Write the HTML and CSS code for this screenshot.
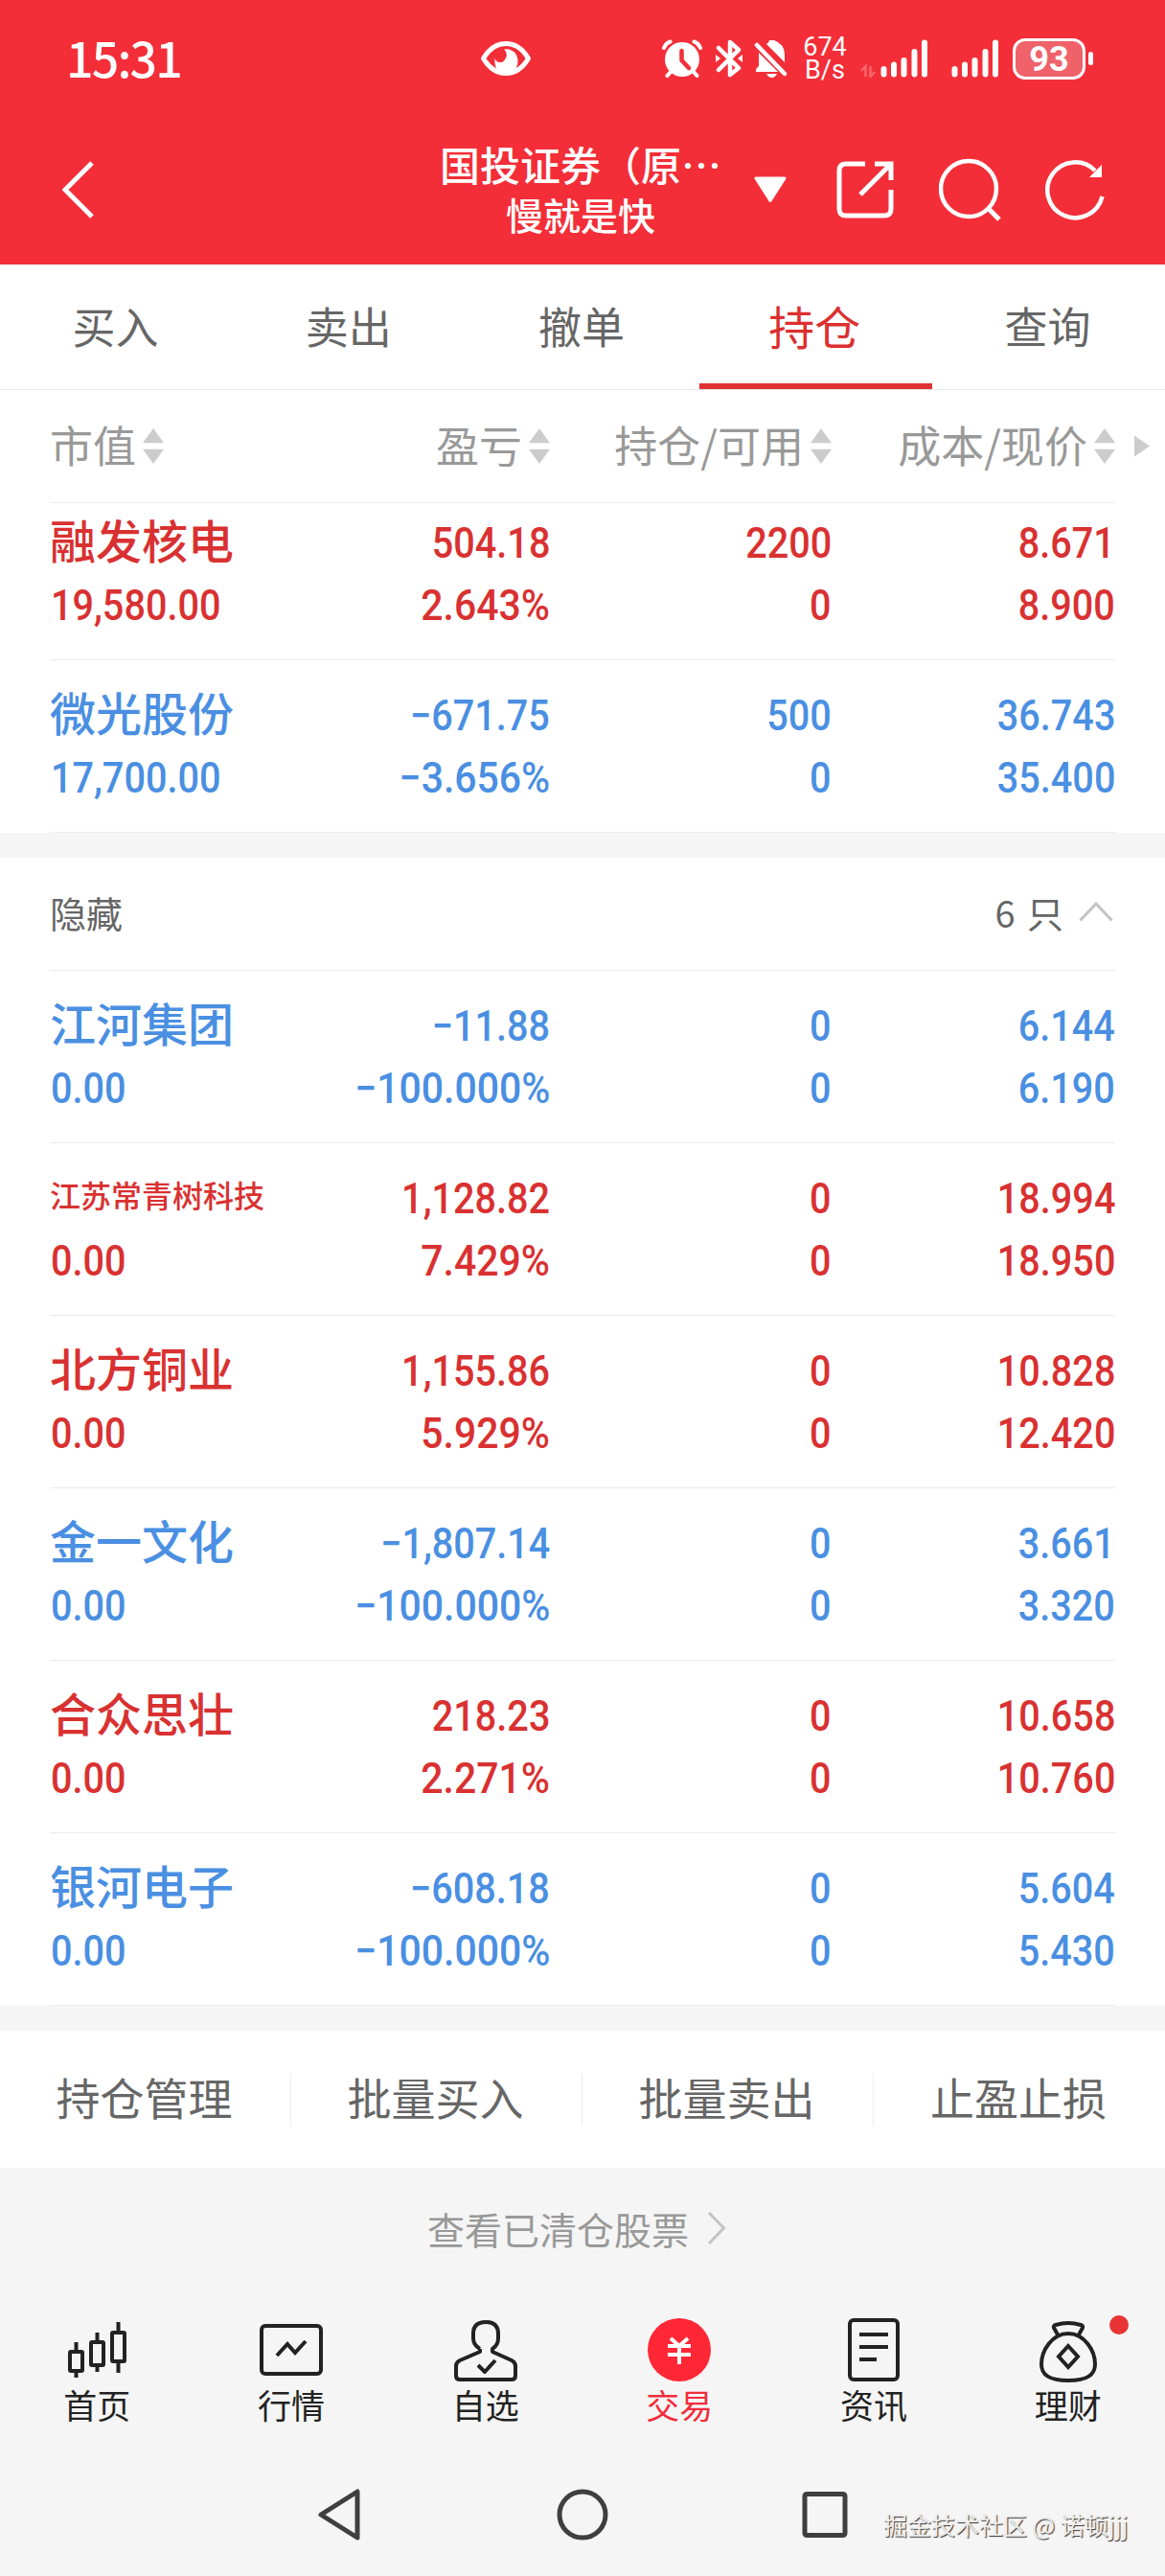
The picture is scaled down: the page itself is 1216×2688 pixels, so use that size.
FILE: index.html
```html
<!DOCTYPE html>
<html lang="zh-CN">
<head>
    <meta charset="UTF-8">
    <meta name="viewport" content="width=device-width, initial-scale=1.0">
    <title>持仓</title>
    <link rel="stylesheet" href="styles.css">
</head>
<body>
    <header class="header">
        <div class="status-bar">
            <span class="time">15:31</span>
            <svg class="icon-eye" width="54" height="38" viewBox="0 0 54 38">
                <path d="M3.500 19C10 8 17 3.500 27 3.500S44 8 50.500 19C44 30 37 34.500 27 34.500S10 30 3.500 19Z" fill="none" stroke="#fff" stroke-width="5" stroke-linejoin="round"/>
                <path d="M25 9.500A12 12 0 0 1 39.500 21C39.500 30 34 36 27 36S14.500 30 15.500 18.500A5.600 5.600 0 0 0 26 20C29 17 28 12 25 9.500Z" fill="#fff"/>
            </svg>
            <div class="status-right">
                <svg width="42" height="40" viewBox="0 0 42 40">
                    <circle cx="21" cy="21" r="18" fill="#fff"/>
                    <path d="M2 9Q4 4 8.500 2.500M40 9Q38 4 33.500 2.500M9 34L5.500 38M33 34L36.500 38" stroke="#fff" stroke-width="4" stroke-linecap="round" fill="none"/>
                    <path d="M20.500 12V22L28 30" stroke="#f32e38" stroke-width="4.500" stroke-linecap="round" stroke-linejoin="round" fill="none"/>
                </svg>
                <svg class="icon-bt" width="28" height="40" viewBox="0 0 28 40">
                    <path d="M3 9L24 30L15 37V3L24 11L3 32" stroke="#fff" stroke-width="4.500" stroke-linejoin="round" stroke-linecap="round" fill="none"/>
                    <path d="M0 16L5 20L0 24ZM28 16L23 20L28 24Z" fill="#fff"/>
                </svg>
                <svg class="icon-bell" width="36" height="40" viewBox="0 0 36 40">
                    <path d="M2 34V31L5 28V14L25 34ZM13 5Q16 3.500 16 1H21Q32 5 32 16V24Z" fill="#fff"/>
                    <path d="M13 36H24Q22 40 18.500 40T13 36Z" fill="#fff"/>
                    <path d="M3 6L32 36" stroke="#fff" stroke-width="4.500" stroke-linecap="round"/>
                </svg>
                <div class="speed"><span>674</span><span>B/s</span></div>
                <svg class="signal" width="70" height="40" viewBox="0 0 70 40">
                    <path d="M5.500 39V28L1 33M10.500 28V39L15 34" stroke="#f9656c" stroke-width="2.500" fill="none"/>
                    <path d="M24.500 31V36.500M35 26.500V36.500M45.500 22V36.500M56.500 13V36.500M67 3.500V36.500" stroke="#fff" stroke-width="6" stroke-linecap="round"/>
                </svg>
                <svg class="signal-second" width="50" height="40" viewBox="20 0 50 40">
                    <path d="M24.500 31V36.500M35 26.500V36.500M45.500 22V36.500M56.500 13V36.500M67 3.500V36.500" stroke="#fff" stroke-width="6" stroke-linecap="round"/>
                </svg>
                <div class="battery">93</div>
                <div class="battery-tip"></div>
            </div>
        </div>
        <div class="title-bar">
            <svg class="back" width="34" height="60" viewBox="0 0 34 60">
                <path d="M31 2L3 30L31 58" stroke="#fff" stroke-width="5" fill="none"/>
            </svg>
            <div class="title">
                <div class="account">国投证券（原…</div>
                <div class="nickname">慢就是快</div>
            </div>
            <svg class="dropdown" width="34" height="28" viewBox="0 0 34 28">
                <path d="M2 2H32L17 25.500Z" fill="#fff" stroke="#fff" stroke-width="3" stroke-linejoin="round"/>
            </svg>
            <svg class="share" width="60" height="60" viewBox="0 0 60 60">
                <path d="M30 3H10Q3 3 3 10V50Q3 57 10 57H50Q57 57 57 50V30M40 3H57V20M56 4L25 35" stroke="#fff" stroke-width="5" fill="none"/>
            </svg>
            <svg class="search" width="66" height="66" viewBox="0 0 66 66">
                <circle cx="31" cy="32" r="29" stroke="#fff" stroke-width="4.500" fill="none"/>
                <path d="M51 52L63 64" stroke="#fff" stroke-width="5"/>
            </svg>
            <svg class="refresh" width="64" height="64" viewBox="0 0 64 64">
                <path d="M52 12A29 29 0 1 0 59.500 39" stroke="#fff" stroke-width="4.500" fill="none"/>
                <path d="M59 6V19H46Z" fill="#fff"/>
            </svg>
        </div>
    </header>

    <nav class="tabs">
        <a>买入</a>
        <a>卖出</a>
        <a>撤单</a>
        <a class="active">持仓</a>
        <a>查询</a>
    </nav>

    <div class="table-head">
        <div>市值<i class="sort"></i></div>
        <div>盈亏<i class="sort"></i></div>
        <div>持仓/可用<i class="sort"></i></div>
        <div>成本/现价<i class="sort"></i></div>
        <i class="more"></i>
    </div>

    <section class="list">
        <div class="row up first">
            <div><span class="name">融发核电</span><span class="num">19,580.00</span></div>
            <div><span class="num">504.18</span><span class="num">2.643%</span></div>
            <div><span class="num">2200</span><span class="num">0</span></div>
            <div><span class="num">8.671</span><span class="num">8.900</span></div>
        </div>
        <div class="row down">
            <div><span class="name">微光股份</span><span class="num">17,700.00</span></div>
            <div><span class="num">−671.75</span><span class="num">−3.656%</span></div>
            <div><span class="num">500</span><span class="num">0</span></div>
            <div><span class="num">36.743</span><span class="num">35.400</span></div>
        </div>
    </section>

    <div class="gap"></div>

    <div class="group-head">
        <span>隐藏</span>
        <span class="count">6 只
            <svg width="36" height="22" viewBox="0 0 36 22">
                <path d="M1.500 20.500L18 3L34.500 20.500" stroke="#c4c4c4" stroke-width="3" fill="none"/>
            </svg>
        </span>
    </div>

    <section class="list">
        <div class="row down top-line">
            <div><span class="name">江河集团</span><span class="num">0.00</span></div>
            <div><span class="num">−11.88</span><span class="num">−100.000%</span></div>
            <div><span class="num">0</span><span class="num">0</span></div>
            <div><span class="num">6.144</span><span class="num">6.190</span></div>
        </div>
        <div class="row up">
            <div><span class="name small">江苏常青树科技</span><span class="num">0.00</span></div>
            <div><span class="num">1,128.82</span><span class="num">7.429%</span></div>
            <div><span class="num">0</span><span class="num">0</span></div>
            <div><span class="num">18.994</span><span class="num">18.950</span></div>
        </div>
        <div class="row up">
            <div><span class="name">北方铜业</span><span class="num">0.00</span></div>
            <div><span class="num">1,155.86</span><span class="num">5.929%</span></div>
            <div><span class="num">0</span><span class="num">0</span></div>
            <div><span class="num">10.828</span><span class="num">12.420</span></div>
        </div>
        <div class="row down">
            <div><span class="name">金一文化</span><span class="num">0.00</span></div>
            <div><span class="num">−1,807.14</span><span class="num">−100.000%</span></div>
            <div><span class="num">0</span><span class="num">0</span></div>
            <div><span class="num">3.661</span><span class="num">3.320</span></div>
        </div>
        <div class="row up">
            <div><span class="name">合众思壮</span><span class="num">0.00</span></div>
            <div><span class="num">218.23</span><span class="num">2.271%</span></div>
            <div><span class="num">0</span><span class="num">0</span></div>
            <div><span class="num">10.658</span><span class="num">10.760</span></div>
        </div>
        <div class="row down">
            <div><span class="name">银河电子</span><span class="num">0.00</span></div>
            <div><span class="num">−608.18</span><span class="num">−100.000%</span></div>
            <div><span class="num">0</span><span class="num">0</span></div>
            <div><span class="num">5.604</span><span class="num">5.430</span></div>
        </div>
    </section>

    <div class="gap"></div>

    <div class="actions">
        <a>持仓管理</a>
        <a>批量买入</a>
        <a>批量卖出</a>
        <a>止盈止损</a>
    </div>

    <div class="cleared">
        查看已清仓股票
        <svg width="20" height="34" viewBox="0 0 20 34">
            <path d="M2 1L17.500 17L2 33" stroke="#c4c4c4" stroke-width="3" fill="none"/>
        </svg>
    </div>

    <nav class="bottom-nav">
        <a>
            <svg width="70" height="70" viewBox="0 0 70 70">
                <g stroke="#222" stroke-width="4" fill="none">
                    <rect x="7" y="37" width="13" height="20" rx="1"/>
                    <rect x="29" y="27" width="13" height="24" rx="1"/>
                    <rect x="51" y="17" width="13" height="30" rx="1"/>
                    <path d="M13.500 27V37M13.500 57V64M35.500 17V27M35.500 51V58M57.500 6V17M57.500 47V59"/>
                </g>
            </svg>
            首页
        </a>
        <a>
            <svg width="70" height="70" viewBox="0 0 70 70">
                <g stroke="#222" stroke-width="4" fill="none">
                    <rect x="4" y="10" width="62" height="50" rx="4"/>
                    <path d="M20 41L31 29L39 38L50 26"/>
                </g>
            </svg>
            行情
        </a>
        <a>
            <svg width="70" height="70" viewBox="0 0 70 70">
                <g stroke="#222" stroke-width="4" fill="none" stroke-linejoin="round">
                    <path d="M29 34V37L8 46Q4 48 4 52V62Q4 66 8 66H62Q66 66 66 62V52Q66 48 62 46L42 37V34Q48 30 48 23V18Q48 6 35 6T22 18V23Q22 30 29 34"/>
                    <path d="M27 51L34 58L45 46"/>
                </g>
            </svg>
            自选
        </a>
        <a class="active">
            <svg width="70" height="70" viewBox="0 0 70 70">
                <circle cx="35" cy="35" r="33" fill="#ff2736"/>
                <path d="M26 23L35 31L44 23M23 31H47M23 40H47M35 31V50" stroke="#fff" stroke-width="4" fill="none"/>
            </svg>
            交易
        </a>
        <a>
            <svg width="70" height="70" viewBox="0 0 70 70">
                <g stroke="#222" stroke-width="4" fill="none">
                    <rect x="10" y="4" width="50" height="62" rx="4"/>
                    <path d="M20 19H50M20 32H50M20 45H38"/>
                </g>
            </svg>
            资讯
        </a>
        <a>
            <svg width="70" height="70" viewBox="0 0 70 70">
                <g stroke="#222" stroke-width="4" fill="none" stroke-linejoin="round">
                    <path d="M35 18C18 18 7 36 7 50C7 62 16 67 35 67S63 62 63 50C63 36 52 18 35 18Z"/>
                    <path d="M25 21L20 12Q19 10 22 9Q35 5 48 9Q51 10 50 12L45 21"/>
                    <path d="M35 31L45 42L35 53L25 42Z" stroke-linejoin="miter"/>
                </g>
            </svg>
            理财
            <i class="badge"></i>
        </a>
    </nav>

    <footer class="system-nav">
        <svg width="50" height="60" viewBox="0 0 50 60">
            <path d="M5 30L43 6V54Z" stroke="#3f3f3f" stroke-width="5" stroke-linejoin="round" fill="none"/>
        </svg>
        <svg width="60" height="60" viewBox="0 0 60 60">
            <circle cx="30" cy="30" r="24" stroke="#3f3f3f" stroke-width="5" fill="none"/>
        </svg>
        <svg width="50" height="60" viewBox="0 0 50 60">
            <rect x="4" y="8.500" width="42" height="43" rx="2" stroke="#3f3f3f" stroke-width="5" fill="none"/>
        </svg>
        <span class="watermark">掘金技术社区 @ 诺顿jjj</span>
    </footer>
</body>
</html>
```
FILE: styles.css
```css
* {
    box-sizing: border-box;
}

body {
    width: 1216px;
    margin: 0;
    background-color: #f5f5f5;
    font-family: "Noto Sans CJK SC", sans-serif;
    color: #666;
}

svg {
    display: block;
    flex-shrink: 0;
}

/* 顶部 */
.header {
    height: 276px;
    background-color: #f32e38;
    color: #fff;
}

.status-bar {
    display: flex;
    align-items: center;
    height: 122px;
    padding-left: 69px;
}

.time {
    width: 432px;
    padding-bottom: 4px;
    font-size: 50px;
    font-weight: 500;
    letter-spacing: -1.8px;
}

.status-right {
    display: flex;
    align-items: center;
    margin-left: 136px;
}

.icon-bt {
    margin-left: 14px;
}

.icon-bell {
    margin-left: 12px;
}

.speed {
    display: flex;
    flex-direction: column;
    align-items: center;
    width: 46px;
    margin-left: 15px;
    font-family: Roboto, sans-serif;
    font-size: 27px;
    line-height: 24px;
}

.signal {
    margin-left: 14px;
}

.signal-second {
    margin-left: 24px;
}

.battery {
    width: 76px;
    height: 43px;
    margin-left: 15px;
    border: 3px solid #fff;
    border-radius: 13px;
    background-color: #ef626a;
    font-family: Roboto, sans-serif;
    font-size: 36px;
    font-weight: 700;
    line-height: 38px;
    text-align: center;
}

.battery-tip {
    width: 5px;
    height: 14px;
    margin-left: 3px;
    border-radius: 3px;
    background-color: #fff;
}

.title-bar {
    display: flex;
    align-items: center;
    height: 152px;
}

.back {
    margin-left: 65px;
}

.title {
    width: 294px;
    margin-left: 360px;
    padding-bottom: 3px;
    text-align: center;
    font-weight: 500;
    white-space: nowrap;
}

.account {
    font-size: 42px;
    line-height: 52px;
}

.nickname {
    font-size: 39px;
    line-height: 52px;
}

.dropdown {
    margin-left: 34px;
}

.share {
    margin-left: 52px;
}

.search {
    margin-left: 47px;
}

.refresh {
    margin-left: 45px;
}

/* 标签 */
.tabs {
    display: flex;
    height: 131px;
    border-bottom: 1px solid #e8e8e8;
    background-color: #fff;
}

.tabs a {
    flex: 1;
    padding-right: 2px;
    font-size: 45px;
    line-height: 127px;
    text-align: center;
}

.tabs .active {
    border-bottom: 6px solid #e03232;
    font-size: 48px;
    line-height: 126px;
    color: #dc2f2f;
}

/* 表头 */
.table-head {
    display: grid;
    grid-template-columns: 230px 292px 294px 296px 36px;
    align-items: center;
    height: 117px;
    padding-left: 52px;
    background-color: #fff;
    font-size: 45px;
    line-height: 60px;
    color: #999;
}

.table-head div {
    display: flex;
    align-items: center;
    justify-content: flex-end;
    padding-bottom: 4px;
}

.table-head div:first-child {
    justify-content: flex-start;
}

.sort {
    width: 22px;
    height: 37px;
    margin: 4px 0 0 7px;
    background-color: #ccc;
    clip-path: polygon(50% 0, 100% 41%, 0 41%, 0 59%, 100% 59%, 50% 100%, 0 59%, 0 41%);
}

.more {
    width: 16px;
    height: 22px;
    margin-left: 20px;
    background-color: #ccc;
    clip-path: polygon(0 0, 100% 50%, 0 100%);
}

/* 持仓列表 */
.list {
    padding: 0 52px;
    background-color: #fff;
}

.row {
    display: grid;
    grid-template-columns: 230px 292px 294px 296px;
    height: 180px;
    padding-top: 25px;
    border-bottom: 1px solid #ececec;
}

.row.first {
    height: 165px;
    padding-top: 9px;
    border-top: 1px solid #ececec;
}

.row.top-line {
    height: 181px;
    border-top: 1px solid #ececec;
}

.row div {
    display: flex;
    flex-direction: column;
    align-items: flex-end;
}

.row div:first-child {
    align-items: flex-start;
}

.name {
    height: 65px;
    font-size: 48px;
    font-weight: 500;
    line-height: 57px;
    white-space: nowrap;
}

.name.small {
    font-size: 32px;
}

.num {
    font-family: Roboto, sans-serif;
    font-size: 45px;
    font-weight: 500;
    line-height: 65px;
    transform: scaleX(0.88);
    transform-origin: right;
}

.row div:first-child .num {
    transform-origin: left;
    margin-left: 1px;
}

/* 百分比 */
.row div:nth-child(2) .num:last-child {
    transform: scaleX(0.91);
}

.up {
    color: #d93131;
}

.down {
    color: #4a8fe2;
}

.gap {
    height: 26px;
    background-color: #f5f5f5;
}

.group-head {
    display: flex;
    align-items: center;
    justify-content: space-between;
    height: 117px;
    padding: 0 52px 5px;
    background-color: #fff;
    font-size: 38px;
}

.count {
    display: flex;
    align-items: center;
    gap: 16px;
    padding-right: 2px;
    word-spacing: 4px;
}

.actions {
    display: flex;
    align-items: center;
    height: 143px;
    background-color: #fff;
}

.actions a {
    width: 304px;
    height: 54px;
    padding-right: 2px;
    border-right: 1px solid #eee;
    font-size: 46px;
    line-height: 46px;
    text-align: center;
}

.actions a:last-child {
    border-right: 0;
}

.cleared {
    display: flex;
    align-items: center;
    justify-content: center;
    gap: 19px;
    height: 130px;
    padding: 0 12px 5px 0;
    font-size: 39px;
    color: #999;
}

/* 底部导航 */
.bottom-nav {
    display: flex;
    height: 152px;
    padding-top: 25px;
}

.bottom-nav a {
    position: relative;
    display: flex;
    flex: 1;
    flex-direction: column;
    align-items: center;
    font-size: 35px;
    line-height: 44px;
    color: #222;
}

.bottom-nav .active {
    color: #f22c3a;
}

.badge {
    position: absolute;
    top: -1px;
    right: 38px;
    width: 20px;
    height: 20px;
    border-radius: 50%;
    background-color: #e83434;
}

.system-nav {
    display: flex;
    align-items: center;
    height: 145px;
    padding: 14px 0 0 330px;
}

.system-nav svg + svg {
    margin-left: 198px;
}

.system-nav svg:nth-child(3) {
    margin-left: 198px;
}

.watermark {
    margin: 20px 0 0 36px;
    font-size: 25px;
    color: #eee;
    text-shadow: 1px 1px 1px #333;
    white-space: nowrap;
}
```
